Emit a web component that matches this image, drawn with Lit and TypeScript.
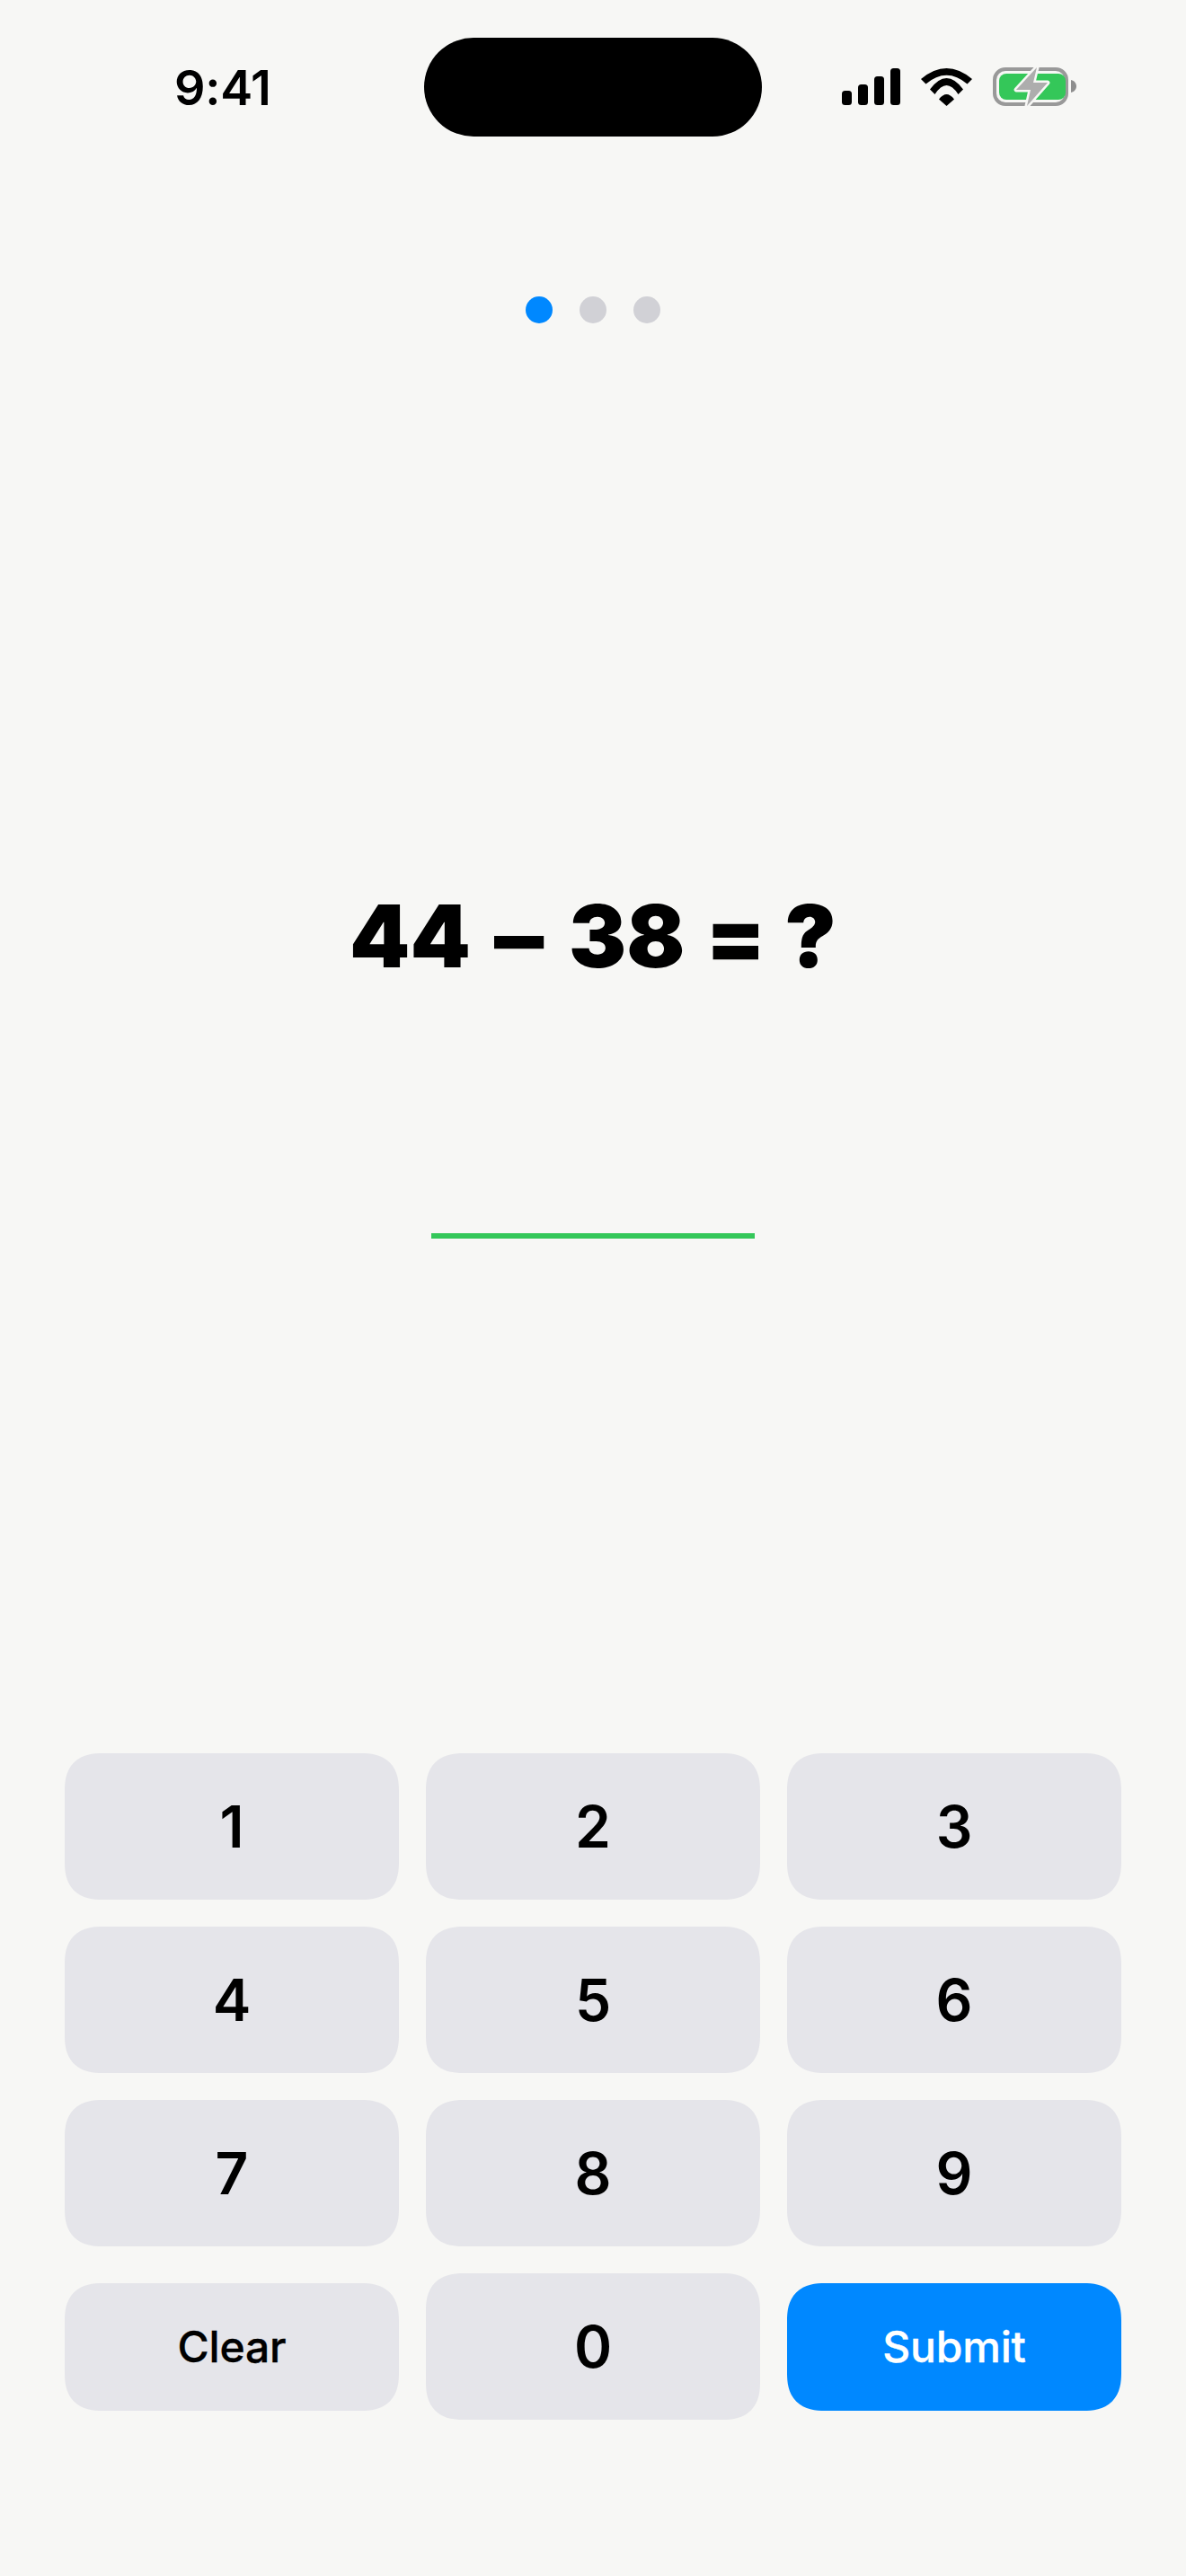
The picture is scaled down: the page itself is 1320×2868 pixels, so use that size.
import { LitElement, html, css } from "lit";
import { customElement } from "lit/decorators.js";

@customElement("app-root")
export class AppRoot extends LitElement {
  static styles = css`
    :host { display: block; width: 1320px; height: 2868px; background: #f7f7f5; font-family: Inter, "Noto Sans", sans-serif; color: #000; overflow: hidden; }
    .screen { display: flex; flex-direction: column; height: 2868px; box-sizing: border-box; }
    .status { height: 152px; flex: none; display: flex; align-items: flex-start; justify-content: space-between; position: relative; }
    .time { font-size: 54px; font-weight: 600; line-height: 64px; margin: 66px 0 0 194px; letter-spacing: -0.3px; }
    .island { position: absolute; left: 472px; top: 42px; width: 376px; height: 110px; border-radius: 55px; background: #000; }
    .icons { margin: 70px 120px 0 0; flex: none; }
    .dots { display: flex; justify-content: center; gap: 30px; margin-top: 178px; flex: none; }
    .dot { width: 30px; height: 30px; border-radius: 50%; background: #d1d1d6; }
    .dot.on { background: #0088ff; }
    .q { margin: 624px 0 0; font-size: 96px; font-weight: 900; line-height: 116px; text-align: center; flex: none; word-spacing: 7px; }
    .dash { display: inline-block; transform: scaleX(1.15); transform-origin: left center; margin-right: 9px; }
    .eq { display: inline-block; margin: 0 -5px 0 -3px; }
    .line { width: 360px; height: 6px; background: #34c759; margin: 273px auto 0; flex: none; }
    .pad { display: grid; grid-template-columns: repeat(3, 372px); grid-auto-rows: 163px; gap: 30px; margin: auto 72px 0; padding-bottom: 174px; }
    button { border: 0; padding: 0; margin: 0; background: #e5e5ea; border-radius: 42px; corner-shape: superellipse(1.3); color: #000; font-family: inherit; font-size: 64px; font-weight: 600; display: flex; align-items: center; justify-content: center; }
    button.small { height: 142px; align-self: center; font-size: 48px; font-weight: 500; letter-spacing: -0.2px; -webkit-text-stroke: 0.35px currentColor; }
    button.blue { background: #0088ff; color: #fff; }
  `;

  render() {
    const keys = ["1","2","3","4","5","6","7","8","9"];
    return html`<div class="screen">
      <div class="status">
        <span class="time">9:41</span>
        <div class="island"></div>
        <svg class="icons" width="270" height="54" viewBox="930 70 270 54">
          <rect x="937" y="101" width="11" height="16" rx="3.5" fill="#000"/>
          <rect x="955" y="94" width="11" height="23" rx="3.5" fill="#000"/>
          <rect x="973" y="85" width="11" height="32" rx="3.5" fill="#000"/>
          <rect x="991" y="76" width="11" height="41" rx="3.5" fill="#000"/>
          <path d="M1025 88 Q1053.5 64 1082 88 L1076.5 93.5 Q1053.5 74 1030.5 93.5 Z" fill="#000"/>
          <path d="M1035 99.5 Q1053.5 74.5 1072 99.5 L1066.5 105 Q1053.5 85 1040.5 105 Z" fill="#000"/>
          <path d="M1045 110.5 Q1053.5 99.5 1062 110.5 L1053.5 118 Z" fill="#000"/>
          <rect x="1107" y="77" width="80" height="39" rx="12" fill="none" stroke="#999" stroke-width="4"/>
          <rect x="1112" y="82" width="74" height="29" rx="8" fill="#34c759"/>
          <path d="M1192 89 C1196 90 1198 93 1198 96 C1198 99 1196 102 1192 103 Z" fill="#8e8e8e"/>
          <path d="M1154 75 L1131 100 H1147 L1143 118 L1166 92 H1150 Z" fill="#adadad" stroke="#f7f7f5" stroke-width="5" stroke-linejoin="round" paint-order="stroke"/>
        </svg>
      </div>
      <div class="dots"><div class="dot on"></div><div class="dot"></div><div class="dot"></div></div>
      <h1 class="q">44 <span class="dash">–</span> 38 <span class="eq">=</span> ?</h1>
      <div class="line"></div>
      <div class="pad">
        ${keys.map((k) => html`<button>${k}</button>`)}
        <button class="small">Clear</button>
        <button>0</button>
        <button class="small blue">Submit</button>
      </div>
    </div>`;
  }
}
